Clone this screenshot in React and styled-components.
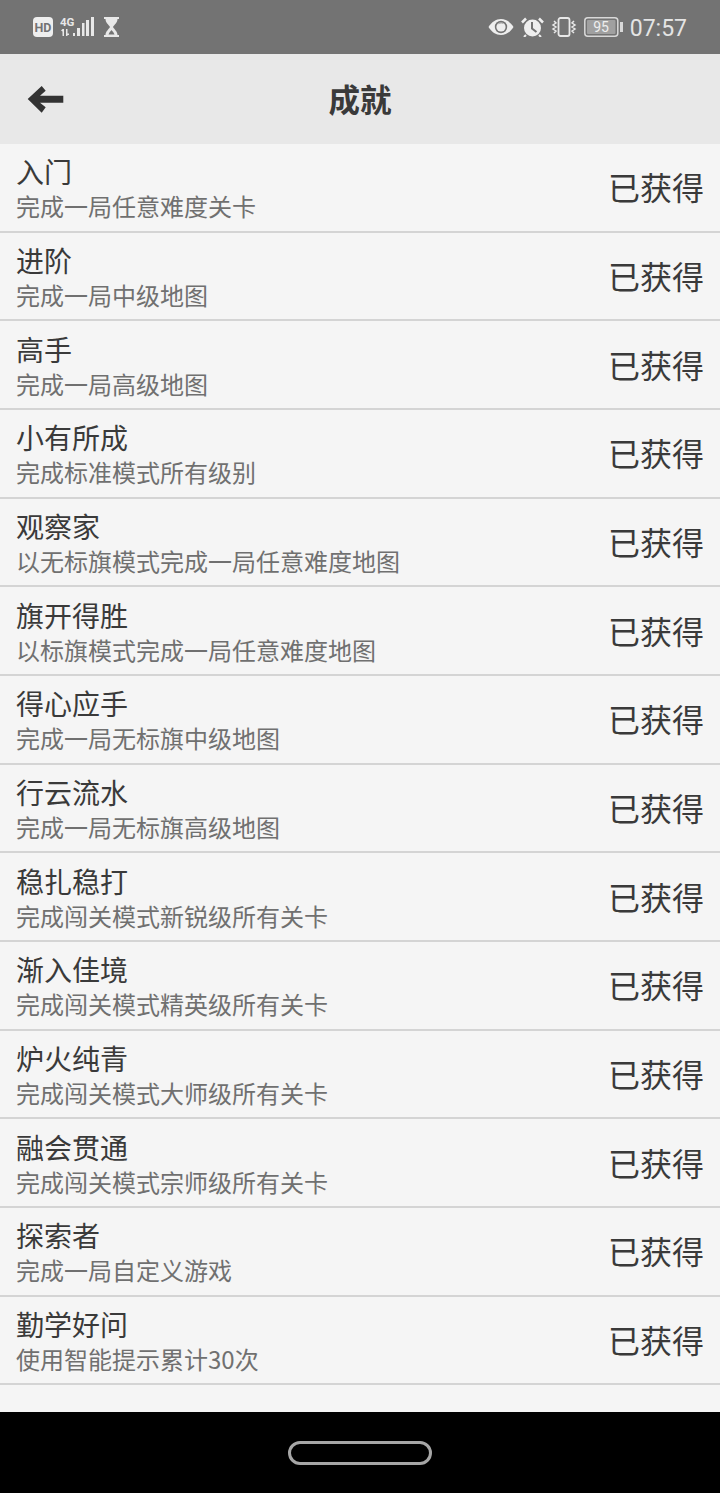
import React from "react";
import styled, { createGlobalStyle } from "styled-components";

const GlobalStyle = createGlobalStyle`
html, body {
    margin: 0;
    padding: 0;
    background: #000;
}
* {
    box-sizing: border-box;
}
`

const Page = styled.div`
display: flex;
flex-direction: column;
width: 720px;
height: 1493px;
overflow: hidden;
background: #f5f5f5;
font-family: "Noto Sans CJK SC", "Roboto", sans-serif;
`
const StatusBar = styled.div`
display: flex;
align-items: center;
justify-content: space-between;
height: 54px;
padding: 0 33px;
background: #737373;
color: #e8e8e8;
`
const StatusGroup = styled.div`
display: flex;
align-items: center;
gap: ${props => props.gap}px;
`
const SignalIcon = styled.svg`
margin-bottom: 3px;
`
const Hourglass = styled.svg`
margin-left: 3px;
`
const Clock = styled.span`
font-family: "Roboto", sans-serif;
font-size: 23px;
line-height: 28px;
padding-top: 3px;
color: #e4e4e4;
`
const Header = styled.div`
display: flex;
align-items: center;
justify-content: center;
position: relative;
height: 90px;
padding-bottom: 2px;
background: #e8e8e8;
`
const BackIcon = styled.svg`
position: absolute;
left: 27px;
top: 30px;
`
const Title = styled.h1`
margin: 0;
font-size: 31.5px;
line-height: 40px;
font-weight: 700;
color: #3a3a3a;
`
const List = styled.div`
display: flex;
flex-direction: column;
flex: 1;
`
const Row = styled.div`
display: flex;
align-items: center;
justify-content: space-between;
height: 88.66px;
padding: 0 16px;
border-bottom: 2px solid #d4d4d4;
`
const RowText = styled.div`
display: flex;
flex-direction: column;
`
const RowTitle = styled.div`
font-size: 28px;
line-height: 38px;
color: #3a3a3a;
`
const RowDesc = styled.div`
font-size: 24px;
line-height: 32px;
color: #707070;
`
const Earned = styled.div`
font-size: 32px;
line-height: 40px;
padding-bottom: 2px;
color: #3a3a3a;
`
const NavBar = styled.div`
display: flex;
align-items: center;
justify-content: center;
height: 81px;
background: #000;
`
const HomePill = styled.div`
width: 144px;
height: 24px;
border: 3px solid #a6a6a6;
border-radius: 12px;
`

const achievements = [
    ["入门", "完成一局任意难度关卡"],
    ["进阶", "完成一局中级地图"],
    ["高手", "完成一局高级地图"],
    ["小有所成", "完成标准模式所有级别"],
    ["观察家", "以无标旗模式完成一局任意难度地图"],
    ["旗开得胜", "以标旗模式完成一局任意难度地图"],
    ["得心应手", "完成一局无标旗中级地图"],
    ["行云流水", "完成一局无标旗高级地图"],
    ["稳扎稳打", "完成闯关模式新锐级所有关卡"],
    ["渐入佳境", "完成闯关模式精英级所有关卡"],
    ["炉火纯青", "完成闯关模式大师级所有关卡"],
    ["融会贯通", "完成闯关模式宗师级所有关卡"],
    ["探索者", "完成一局自定义游戏"],
    ["勤学好问", "使用智能提示累计30次"],
]

const LeftIcons = () => (
    <StatusGroup gap={7}>
        <svg width="20" height="20" viewBox="0 0 20 20">
            <rect x="0" y="0" width="20" height="20" rx="4" fill="#eee" />
            <text x="10" y="14.5" fontSize="12.5" fontWeight="700" textAnchor="middle" fontFamily="Roboto" fill="#737373">HD</text>
        </svg>
        <SignalIcon width="34" height="23" viewBox="0 -3 34 23" fill="#e8e8e8">
            <text x="0" y="9" fontSize="11.5" fontWeight="700" fontFamily="Roboto">4G</text>
            <path d="M1 13.500l1.500-1.500 1.500 0v7h-1.500v-4.500zM6 12h1.500v4.500h1.500v1.500h-1.500v1h-1.500z" />
            <rect x="13" y="16" width="2" height="3" />
            <rect x="17" y="11" width="3" height="8" />
            <rect x="22" y="6" width="2.500" height="13" />
            <rect x="26" y="3" width="3" height="16" />
            <rect x="31" y="0" width="3" height="19" />
        </SignalIcon>
        <Hourglass width="15" height="20" viewBox="0 0 15 20" fill="#e8e8e8">
            <path d="M0 0h15v2h-1.500c0 3.500-3 5.500-4.500 8 1.500 2.500 4.500 4.500 4.500 8H15v2H0v-2h1.500c0-3.500 3-5.500 4.500-8C4.500 7.500 1.500 5.500 1.500 2H0z" />
            <path d="M4.500 17.500c.8-2.200 2.200-3.300 3-4.500.8 1.200 2.200 2.300 3 4.500z" fill="#737373" />
        </Hourglass>
    </StatusGroup>
)

const RightIcons = () => (
    <StatusGroup gap={7}>
        <svg width="26" height="18" viewBox="0 0 26 18">
            <path d="M0.500 9C3.500 4 8 1 13 1s9.500 3 12.500 8c-3 5-7.500 8-12.500 8S3.500 14 0.500 9z" fill="#eee" />
            <circle cx="13" cy="9" r="6.200" fill="#737373" />
            <circle cx="13" cy="9" r="4.600" fill="#eee" />
            <path d="M9.800 6.500a4 4 0 0 1 6-.8 6 6 0 0 0-6 .8z" fill="#737373" />
        </svg>
        <svg width="23" height="20" viewBox="0 0 23 20">
            <circle cx="11.500" cy="11" r="8.500" fill="#eee" />
            <path d="M11 5v6.500l4.500 3.500" stroke="#737373" strokeWidth="2" fill="none" />
            <path d="M1 5.500l4-4M22 5.500l-4-4" stroke="#eee" strokeWidth="2.500" />
            <path d="M5 18l-2 2M18 18l2 2" stroke="#eee" strokeWidth="2" />
        </svg>
        <svg width="26" height="20" viewBox="0 0 26 20" fill="none" stroke="#e8e8e8" strokeWidth="1.800">
            <rect x="7.500" y="1" width="11" height="18" rx="2" />
            <path d="M3 4l2 2-3 2 3 2-3 2 3 2-2 2M23 4l-2 2 3 2-3 2 3 2-3 2 2 2" strokeWidth="1.500" />
        </svg>
        <svg width="39" height="20" viewBox="0 0 39 20">
            <rect x="0.800" y="0.800" width="33" height="18.400" rx="3" fill="none" stroke="#d8d8d8" strokeWidth="1.500" />
            <rect x="3" y="3" width="28.500" height="14" rx="1" fill="#a0a0a0" />
            <text x="17" y="15" fontSize="14" textAnchor="middle" fontFamily="Roboto" fill="#eee">95</text>
            <rect x="36" y="5" width="3" height="10" fill="#d8d8d8" />
        </svg>
        <Clock>07:57</Clock>
    </StatusGroup>
)

export default function App() {
    return (
        <Page>
            <GlobalStyle />
            <StatusBar>
                <LeftIcons />
                <RightIcons />
            </StatusBar>
            <Header>
                <BackIcon width="38" height="30" viewBox="0 0 38 30">
                    <path d="M0.700 15L14.700 2l4 4.700-5.700 5H36.300v7H13l5.700 4.600-4 5.400z" fill="#333" />
                </BackIcon>
                <Title>成就</Title>
            </Header>
            <List>
                {achievements.map(([name, desc]) => (
                    <Row key={name}>
                        <RowText>
                            <RowTitle>{name}</RowTitle>
                            <RowDesc>{desc}</RowDesc>
                        </RowText>
                        <Earned>已获得</Earned>
                    </Row>
                ))}
            </List>
            <NavBar>
                <HomePill />
            </NavBar>
        </Page>
    )
}
